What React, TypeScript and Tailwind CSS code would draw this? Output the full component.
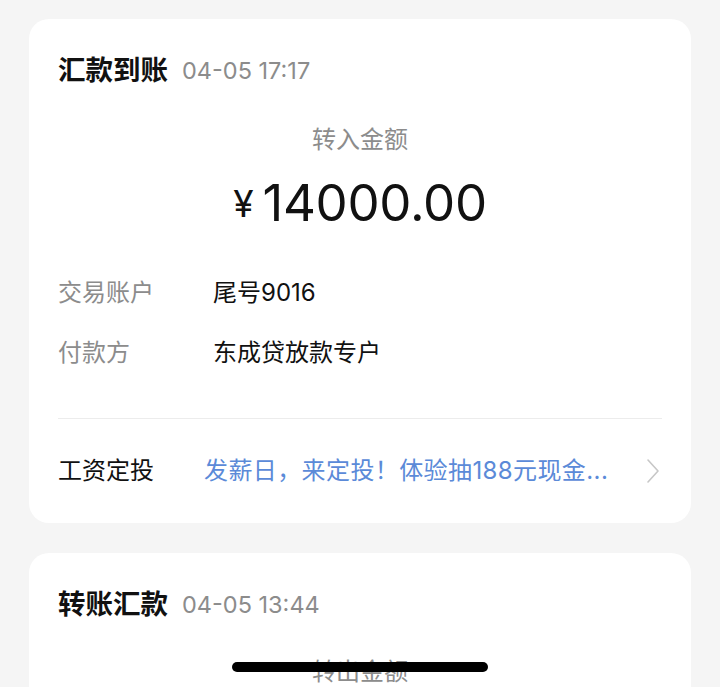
export default function App() {
  const font = { fontFamily: '"Inter", "Noto Sans CJK SC", sans-serif' };
  return (
    <div
      className="relative h-[687px] w-[720px] overflow-hidden bg-[#f5f5f5] px-[29px] pt-[19px]"
      style={font}
    >
      {/* 汇款到账 card */}
      <div className="flex flex-col rounded-[20px] bg-white px-[29px] pt-[34px] pb-[36px]">
        <div className="flex h-[36px] items-center gap-[14px]">
          <span className="text-[27.5px] font-semibold text-[#111]">汇款到账</span>
          <span className="text-[23.5px] text-[#8c8c8c]">04-05 17:17</span>
        </div>
        <div className="mt-[36px] text-center text-[24px] leading-[30px] text-[#8c8c8c]">
          转入金额
        </div>
        <div className="mt-[18px] flex h-[60px] items-center justify-center text-[#111]">
          <span className="mr-[9px] mt-[2px] text-[37px]">¥</span>
          <span className="text-[51px] tracking-[-0.3px]">14000.00</span>
        </div>
        <div className="mt-[44px] flex text-[24px] leading-[32px]">
          <span className="w-[155px] text-[#8c8c8c]">交易账户</span>
          <span className="text-[#111]">尾号9016</span>
        </div>
        <div className="mt-[28px] flex text-[24px] leading-[32px]">
          <span className="w-[155px] text-[#8c8c8c]">付款方</span>
          <span className="text-[#111]">东成贷放款专户</span>
        </div>
        <div className="mt-[49px] h-px bg-[#ececec]" />
        <div className="mt-[36px] flex h-[32px] items-center text-[24px]">
          <span className="w-[146px] text-[#111]">工资定投</span>
          <span className="flex-1 tracking-[0.4px] text-[#5b8ad8]">发薪日，来定投！体验抽188元现金...</span>
          <svg width="14" height="28" viewBox="0 0 14 28" fill="none" className="mr-[2px]">
            <path d="M2 3 L12 14 L2 25" stroke="#c7c7c7" strokeWidth="1.6" strokeLinecap="round" strokeLinejoin="round" />
          </svg>
        </div>
      </div>

      {/* 转账汇款 card */}
      <div className="mt-[30px] flex flex-col rounded-[20px] bg-white px-[29px] pt-[34px] pb-[40px]">
        <div className="flex h-[36px] items-center gap-[14px]">
          <span className="text-[27.5px] font-semibold text-[#111]">转账汇款</span>
          <span className="text-[23.5px] text-[#8c8c8c]">04-05 13:44</span>
        </div>
        <div className="mt-[34px] text-center text-[24px] leading-[30px] text-[#8c8c8c]">
          转出金额
        </div>
      </div>

      {/* home indicator */}
      <div className="absolute left-[232px] top-[662px] h-[10px] w-[256px] rounded-full bg-black" />
    </div>
  );
}
